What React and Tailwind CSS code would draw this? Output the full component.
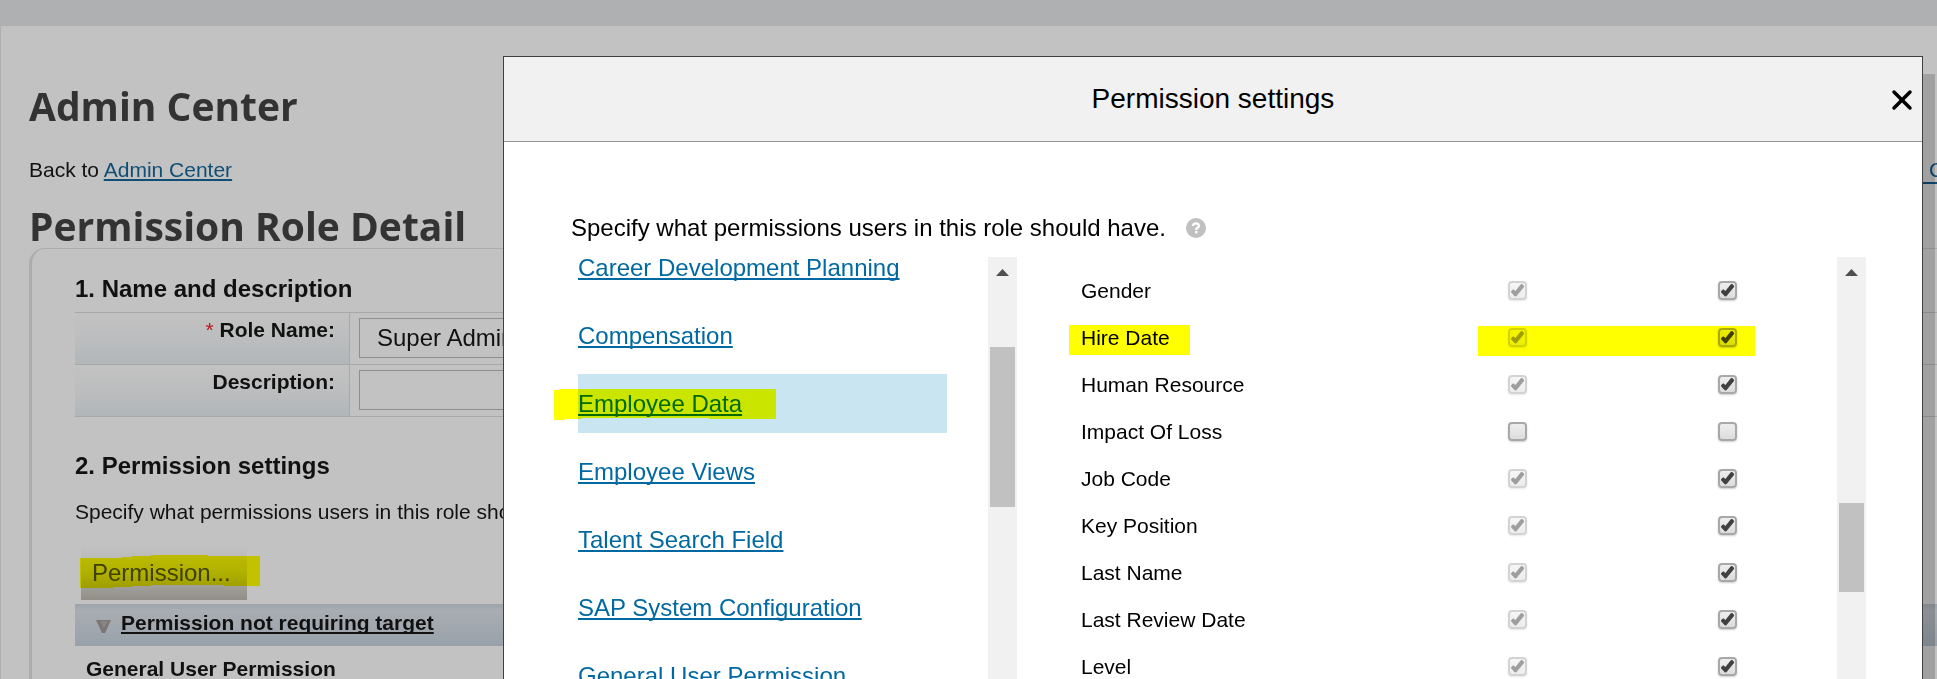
import { X } from 'lucide-react';

const categories = [
  'Career Development Planning',
  'Compensation',
  'Employee Data',
  'Employee Views',
  'Talent Search Field',
  'SAP System Configuration',
  'General User Permission',
];

const fields = [
  { name: 'Gender', view: true, edit: true },
  { name: 'Hire Date', view: true, edit: true, marked: true },
  { name: 'Human Resource', view: true, edit: true },
  { name: 'Impact Of Loss', view: false, edit: false },
  { name: 'Job Code', view: true, edit: true },
  { name: 'Key Position', view: true, edit: true },
  { name: 'Last Name', view: true, edit: true },
  { name: 'Last Review Date', view: true, edit: true },
  { name: 'Level', view: true, edit: true },
];

const linkClass = 'underline decoration-2 underline-offset-2 [text-decoration-skip-ink:none]';

const CheckBox = ({ label, checked, locked = false }) => (
  <span className={`relative block w-[19px] h-[19px] ${locked ? 'opacity-50' : ''}`}>
    <input
      type="checkbox"
      aria-label={label}
      defaultChecked={checked}
      disabled={locked}
      className="peer block appearance-none w-[19px] h-[19px] rounded-[4px] border-2 border-[#a8a8a8] bg-linear-to-b from-[#eeeeee] to-[#dcdcdc] shadow-[0_1px_2px_rgba(0,0,0,0.2)]"
    />
    <svg
      viewBox="0 0 19 19"
      className="absolute inset-0 w-[19px] h-[19px] pointer-events-none invisible peer-checked:visible"
    >
      <path
        d="M3 10.2 L5.2 8.2 L7.4 10 L12.6 3.4 L14 2.8 L16.2 5 L15.8 6.2 L8.4 15.2 L7 15.4 L3.2 11.6 Z"
        fill="#404040"
      />
    </svg>
  </span>
);

const ScrollBar = ({ thumbClass }) => (
  <div className="w-[29px] shrink-0 bg-[#f1f1f1] pt-3">
    <svg viewBox="0 0 13 7" className="block mx-auto w-[13px] h-[7px]" fill="#505050">
      <path d="M6.5 0 L13 7 H0 Z" />
    </svg>
    <div className={`mx-auto w-[25px] bg-[#c1c1c1] ${thumbClass}`} />
  </div>
);

const FormRow = ({ id, label, required = false, value = '' }) => (
  <tr>
    <th className="w-[275px] h-[52px] pt-[5px] pr-[14px] align-top text-right text-[21px] leading-6 font-bold border-t border-r border-[#a8a8a8] bg-linear-to-b from-[#c2c2c2] via-[#bcbdbe] to-[#b1b6b9]">
      {required && <span className="font-normal text-[#c0141c]">* </span>}
      <label htmlFor={id}>{label}</label>
    </th>
    <td className="pt-[5px] pl-[9px] align-top border-t border-[#a8a8a8]">
      <input
        id={id}
        type="text"
        defaultValue={value}
        className="block w-[600px] h-[40px] pl-[17px] text-2xl border border-[#8f8f8f] bg-transparent"
      />
    </td>
  </tr>
);

const PageTitle = ({ children }) => (
  <h1 className="font-['Trebuchet_MS','Open_Sans',sans-serif] text-[39px] leading-[44px] font-bold text-[#333333]">
    {children}
  </h1>
);

const RolePage = () => (
  <>
    <div className="h-[26px] bg-[#afb0b2]" />
    <main className="border-l border-[#afafaf] pt-[58px]">
      <div className="pl-7">
        <PageTitle>Admin Center</PageTitle>
        <div className="mt-[30px] mb-5 flex justify-between text-[21px] leading-6">
          <p>
            Back to <a href="#admin" className={`text-[#104e75] ${linkClass}`}>Admin Center</a>
          </p>
          <a href="#copy" className="w-5 pl-3 overflow-hidden border-b-2 border-[#104e75] text-[#104e75]">
            C
          </a>
        </div>
        <PageTitle>Permission Role Detail</PageTitle>
      </div>

      <section className="ml-7 pl-[43px] pt-[26px] border-t border-l-3 border-[#adadad] rounded-tl-[16px]">
        <h2 className="text-2xl leading-7 font-bold">1. Name and description</h2>
        <table className="mt-[9px] w-full border-separate border-spacing-0 border-b border-[#a8a8a8]">
          <tbody>
            <FormRow id="role" label="Role Name:" required value="Super Admin" />
            <FormRow id="description" label="Description:" />
          </tbody>
        </table>

        <h2 className="mt-[35px] text-2xl leading-7 font-bold">2. Permission settings</h2>
        <p className="mt-5 text-[21px] leading-6">
          Specify what permissions users in this role should have.
        </p>

        <div className="relative mt-[22px] ml-[6px] w-[166px]">
          <button className="block w-full h-[54px] pl-[11px] text-left text-2xl text-[#404040] bg-linear-to-b from-[#c2c2c2] via-[#b0b0ae] to-[#908e86]">
            Permission...
          </button>
          {/* marker stroke */}
          <svg
            viewBox="0 0 180 33"
            className="absolute -left-px top-[9px] w-[180px] h-[33px] mix-blend-multiply pointer-events-none"
          >
            <path
              d="M0 3H42V2H52V1H71V0H128V1H180V31H144V30H71V31H52V32H33V33H0Z"
              fill="#ffff00"
            />
          </svg>
        </div>

        <div className="mt-1 h-[42px] pl-[21px] pb-1 flex items-center gap-[10px] text-[21px] leading-6 font-bold bg-linear-to-b from-[#9ba3ab] via-[#a9adb2] via-15% to-[#98a1aa]">
          <svg viewBox="0 0 15 20" className="w-[15px] h-5">
            <path d="M0 7 H15 L9 20 H6 Z" fill="#7b7676" />
            <path d="M4 8 H12 L8 15 Z" fill="#8a8585" />
          </svg>
          <a href="#target" className={linkClass}>Permission not requiring target</a>
        </div>
        <h3 className="mt-[11px] pl-[11px] text-[21px] leading-6 font-bold">General User Permission</h3>
      </section>
    </main>
  </>
);

const PermissionDialog = () => (
  <div
    role="dialog"
    aria-labelledby="dialog-title"
    className="absolute left-[503px] right-[14px] top-14 bottom-0 flex flex-col bg-white text-black border border-b-0 border-[#404040] shadow-[12px_18px_0_rgba(0,0,0,0.17)]"
  >
    <header className="relative shrink-0 flex items-center justify-center h-[85px] bg-[#f1f1f1] border-b border-[#959595]">
      <h2 id="dialog-title" className="text-[28px] leading-8">Permission settings</h2>
      <button aria-label="Close" className="absolute right-1 top-[27px]">
        <X size={32} strokeWidth={2.6} />
      </button>
    </header>

    <div className="flex flex-col flex-1 min-h-0 pt-[71px]">
      <p className="flex items-center gap-5 pl-[67px] text-2xl leading-[30px]">
        Specify what permissions users in this role should have.
        <svg viewBox="0 0 20 20" className="w-5 h-5" aria-hidden="true">
          <circle cx="10" cy="10" r="10" fill="#c0c0c0" />
          <path
            d="M7 8 C7 4.6 13 4.6 13 7.8 C13 9.6 10.2 9.6 10.2 12"
            fill="none"
            stroke="#fff"
            strokeWidth="2.4"
          />
          <rect x="9" y="13" width="2.4" height="2.4" fill="#fff" />
        </svg>
      </p>

      <div className="mt-[14px] flex flex-1 min-h-0 pl-[74px] pr-14">
        <nav className="flex w-[439px] shrink-0">
          {/* list is scrolled down a little */}
          <ul className="flex-1 -ml-6 pl-6 mr-[41px] overflow-hidden text-2xl">
            {categories.map((name) => (
              <li
                key={name}
                className={`relative flex items-center h-[59px] mb-[9px] first:-mt-[19px] ${
                  name === 'Employee Data' ? 'bg-[#c9e5f1]' : ''
                }`}
              >
                <a href="#category" className={`text-[#0069a1] ${linkClass}`}>{name}</a>
                {name === 'Employee Data' && (
                  <svg
                    viewBox="0 0 222 31"
                    className="absolute -left-6 top-[15px] w-[222px] h-[31px] mix-blend-multiply pointer-events-none"
                  >
                    <path d="M0 1H5V0H222V30H155V29H28V30H11V31H0Z" fill="#ffff00" />
                  </svg>
                )}
              </li>
            ))}
          </ul>
          <ScrollBar thumbClass="mt-[71px] h-[160px]" />
        </nav>

        <div className="flex flex-1 min-w-0 pl-16">
          <div className="flex-1 min-w-0 overflow-hidden pt-[10px] pr-1 -ml-3 pl-3">
            <table className="w-full table-fixed text-[21px] leading-6">
              <colgroup>
                <col />
                <col className="w-[210px]" />
                <col className="w-[210px]" />
              </colgroup>
              <tbody>
                {fields.map(({ name, view, edit, marked }) => (
                  <tr key={name} className="h-[47px]">
                    <th scope="row" className="relative text-left font-normal">
                      {name}
                      {marked && (
                        <span className="absolute -left-3 top-[11px] w-[121px] h-[30px] bg-[#ffff00] mix-blend-multiply pointer-events-none" />
                      )}
                    </th>
                    <td className="relative pl-[95px]">
                      <CheckBox label={`View ${name}`} checked={view} locked={view} />
                      {marked && (
                        <span className="absolute left-[65px] top-3 w-[277px] h-[30px] bg-[#ffff00] mix-blend-multiply pointer-events-none z-10" />
                      )}
                    </td>
                    <td className="pl-[95px]">
                      <CheckBox label={`Edit ${name}`} checked={edit} />
                    </td>
                  </tr>
                ))}
              </tbody>
            </table>
          </div>
          <ScrollBar thumbClass="mt-[227px] h-[89px]" />
        </div>
      </div>
    </div>
  </div>
);

const App = () => (
  <div className="relative h-screen overflow-hidden bg-[#c2c2c2] text-[#111111] font-['Liberation_Sans',Arial,sans-serif]">
    <RolePage />
    <PermissionDialog />
  </div>
);

export default App;
